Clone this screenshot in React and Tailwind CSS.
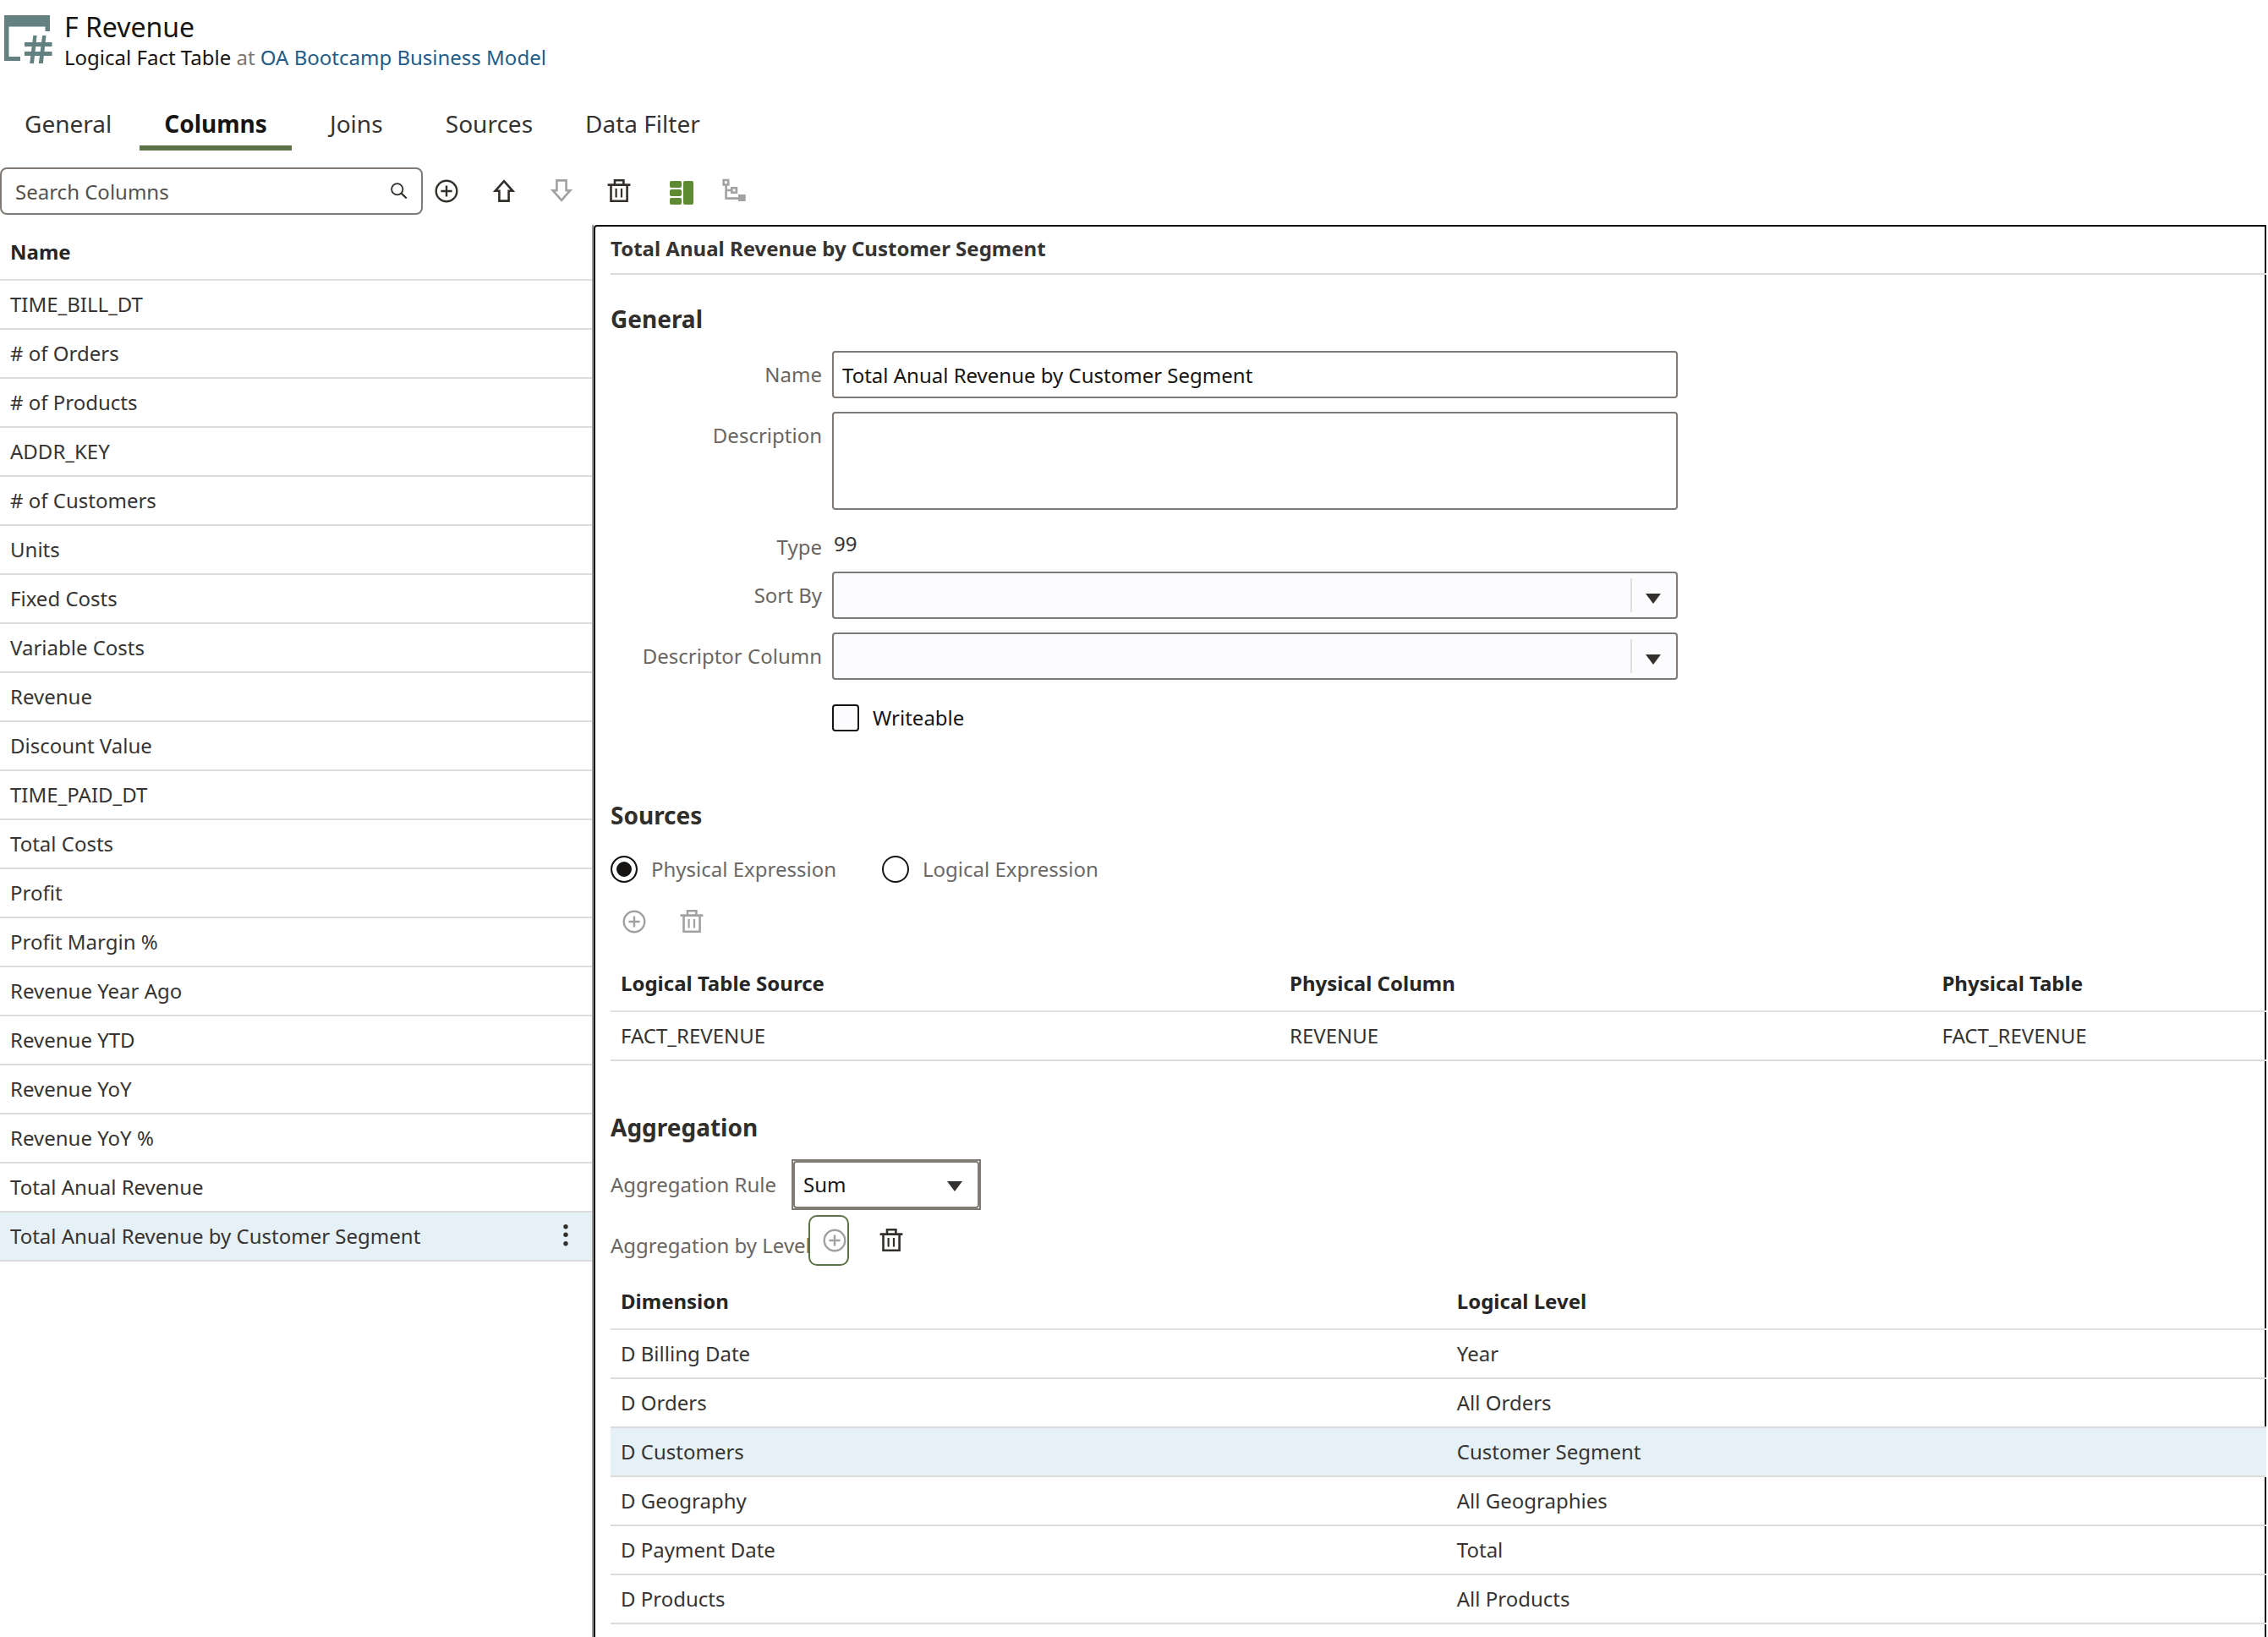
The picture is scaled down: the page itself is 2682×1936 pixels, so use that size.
import React from "react";

const columns = [
  "TIME_BILL_DT",
  "# of Orders",
  "# of Products",
  "ADDR_KEY",
  "# of Customers",
  "Units",
  "Fixed Costs",
  "Variable Costs",
  "Revenue",
  "Discount Value",
  "TIME_PAID_DT",
  "Total Costs",
  "Profit",
  "Profit Margin %",
  "Revenue Year Ago",
  "Revenue YTD",
  "Revenue YoY",
  "Revenue YoY %",
  "Total Anual Revenue",
  "Total Anual Revenue by Customer Segment",
];

const levels = [
  ["D Billing Date", "Year"],
  ["D Orders", "All Orders"],
  ["D Customers", "Customer Segment"],
  ["D Geography", "All Geographies"],
  ["D Payment Date", "Total"],
  ["D Products", "All Products"],
];

const tabs = ["General", "Columns", "Joins", "Sources", "Data Filter"];

function FactTableIcon() {
  return (
    <svg viewBox="0 0 64 80" className="h-20 w-16 shrink-0 fill-[#628180]" aria-hidden="true">
      <path d="M5 18H59V37H53.5V31.5H10.5V67H24V72H5Z" />
      <path d="M29 50H61.5V55H29ZM29 61H61.5V66H29Z" />
      <path d="M39.3 42H43.6L40 75H35.2ZM50.1 42H54.5L50.8 75H45.8Z" />
    </svg>
  );
}

function PlusIcon() {
  return (
    <svg viewBox="0 0 28 28" className="size-7" fill="none" stroke="currentColor" strokeWidth="2.4" aria-hidden="true">
      <circle cx="14" cy="14" r="12.3" />
      <path d="M14 7.4V20.6M7.4 14H20.6" />
    </svg>
  );
}

function UpIcon() {
  return (
    <svg viewBox="0 0 28 28" className="size-7" fill="none" stroke="currentColor" strokeWidth="2.6" aria-hidden="true">
      <path d="M14 2.2L24.3 13.8H19.6V25.6H8.4V13.8H3.7Z" />
    </svg>
  );
}

function DownIcon() {
  return (
    <svg viewBox="0 0 28 28" className="size-7" fill="none" stroke="currentColor" strokeWidth="2.6" aria-hidden="true">
      <path d="M14 24.8L24.3 13.2H19.6V1.4H8.4V13.2H3.7Z" />
    </svg>
  );
}

function TrashIcon() {
  return (
    <svg viewBox="0 0 28 28" className="size-7" fill="none" stroke="currentColor" strokeWidth="2.6" aria-hidden="true">
      <path d="M0.6 6.6H27.4M9 6V1.3H19.4V6M4.5 7V25.7H23.6V7" />
      <path d="M10.6 11V21.4M17 11V21.4" strokeWidth="2.2" />
    </svg>
  );
}

function PanelIcon() {
  return (
    <svg viewBox="0 0 28 32" className="h-8 w-7 fill-[#5f8a34]" aria-hidden="true">
      <rect x="0" y="4" width="14" height="8" rx="2" />
      <rect x="0" y="14" width="14" height="8" rx="2" />
      <rect x="0" y="24" width="14" height="8" rx="2" />
      <rect x="16" y="4" width="12" height="28" rx="2" />
    </svg>
  );
}

function TreeIcon() {
  return (
    <svg viewBox="0 0 28 32" className="h-8 w-7" fill="none" stroke="currentColor" strokeWidth="2.6" aria-hidden="true">
      <rect x="1.6" y="3" width="5.6" height="5.4" />
      <rect x="11.3" y="12.3" width="5.6" height="5.4" />
      <path d="M4.6 9V24.6H20M5 15H11" />
      <rect x="19" y="20" width="8.7" height="8" fill="currentColor" stroke="none" />
    </svg>
  );
}

function Caret() {
  return (
    <svg viewBox="0 0 18 12" className="h-3 w-[18px] fill-[#33302d]" aria-hidden="true">
      <path d="M0 0H18L9 12Z" />
    </svg>
  );
}

function IconButton({ label, muted, children }) {
  return (
    <button type="button" aria-label={label} disabled={muted} className={muted ? "text-[#a3a1a0]" : "text-[#33302c]"}>
      {children}
    </button>
  );
}

const labelText = "w-[250px] shrink-0 text-right leading-14 text-[#6b6661]";
const fieldBox = "w-full max-w-[1000px] rounded-[4px] border-2 border-[#7f7a75]";

function ComboField({ id, label }) {
  return (
    <div className="flex gap-3">
      <label htmlFor={id} className={labelText}>{label}</label>
      <div className="relative w-full max-w-[1000px]">
        <select id={id} className="block h-14 w-full appearance-none rounded-[4px] border-2 border-[#7f7a75] bg-[#fcfcfe] px-3">
          <option></option>
        </select>
        <span className="pointer-events-none absolute inset-y-2 right-5 flex w-9 items-center justify-end border-l-2 border-[#e0dfde] pt-2">
          <Caret />
        </span>
      </div>
    </div>
  );
}

function DataTable({ heads, widths, rows, selected }) {
  return (
    <table className="w-full table-fixed border-collapse text-left">
      <thead>
        <tr className="h-[66px] border-b-2 border-[#e0e0e0] text-[#262626]">
          {heads.map((h, i) => (
            <th key={h} scope="col" className={"px-3 py-0 font-bold " + widths[i]}>{h}</th>
          ))}
        </tr>
      </thead>
      <tbody>
        {rows.map((r, i) => (
          <tr key={r[0]} className={"h-[58px] border-b-2 border-[#dcdcdc] " + (i === selected ? "bg-[#e6f1f7]" : "")}>
            {r.map((c, j) => (
              <td key={j} className="px-3 py-0">{c}</td>
            ))}
          </tr>
        ))}
      </tbody>
    </table>
  );
}

export default function App() {
  return (
    <div className="flex min-h-screen flex-col bg-white font-['Noto_Sans',sans-serif] text-[24px] leading-8 text-[#363432] antialiased">
      <header className="flex h-[84px] gap-3">
        <FactTableIcon />
        <div className="pt-3">
          <h1 className="text-[32px] leading-10 text-[#161513]">F Revenue</h1>
          <p className="text-[#7d7873]">
            <span className="text-[#161513]">Logical Fact Table</span> at{" "}
            <a href="#model" className="text-[#255c86]">OA Bootcamp Business Model</a>
          </p>
        </div>
      </header>

      <nav className="mt-9 flex gap-1 text-[28px]" role="tablist">
        {tabs.map((t) => (
          <button
            key={t}
            type="button"
            role="tab"
            aria-selected={t === "Columns"}
            className={
              "h-[58px] min-w-[145px] border-b-6 px-[29px] " +
              (t === "Columns" ? "border-[#5b7346] font-bold text-[#161513]" : "border-transparent")
            }
          >
            {t}
          </button>
        ))}
      </nav>

      <div className="mt-5 flex items-center">
        <div className="flex h-14 w-[500px] items-center rounded-lg border-2 border-[#7f7a75] px-4">
          <input
            type="text"
            aria-label="Search Columns"
            placeholder="Search Columns"
            className="min-w-0 flex-1 pt-0.5 outline-none placeholder:text-[#55514d]"
          />
          <svg viewBox="0 0 22 22" className="size-5" fill="none" stroke="#33302c" strokeWidth="2" aria-hidden="true">
            <circle cx="8.5" cy="8.5" r="7.3" />
            <path d="M13.6 13.6L20.6 20.4" strokeWidth="2.4" />
          </svg>
        </div>
        <div className="ml-[14px] flex items-center gap-10">
          <IconButton label="Add"><PlusIcon /></IconButton>
          <IconButton label="Move up"><UpIcon /></IconButton>
          <IconButton label="Move down" muted><DownIcon /></IconButton>
          <IconButton label="Delete"><TrashIcon /></IconButton>
        </div>
        <div className="ml-[46px] flex items-center gap-[34px]">
          <IconButton label="Toggle detail view"><PanelIcon /></IconButton>
          <IconButton label="Show hierarchy" muted><TreeIcon /></IconButton>
        </div>
      </div>

      <main className="mt-3 flex flex-1">
        <aside className="w-[26.1%] shrink-0">
          <table className="w-full border-collapse text-left">
            <thead>
              <tr className="h-[65px] border-b-2 border-[#e0e0e0] text-[#262626]">
                <th scope="col" className="px-3 py-0 font-bold">Name</th>
              </tr>
            </thead>
            <tbody>
              {columns.map((c, i) => {
                const active = i === columns.length - 1;
                return (
                  <tr key={c} className={"h-[58px] border-b-2 border-[#dcdcdc] " + (active ? "bg-[#e6f1f7]" : "")}>
                    <td className="px-3 py-0">
                      <div className="flex items-center justify-between">
                        {c}
                        {active && (
                          <button type="button" aria-label="Row actions" className="mr-3">
                            <svg viewBox="0 0 14 28" className="h-7 w-[14px] fill-[#33302c]" aria-hidden="true">
                              <circle cx="7" cy="2.8" r="2.7" />
                              <circle cx="7" cy="12.3" r="2.7" />
                              <circle cx="7" cy="22.8" r="2.7" />
                            </svg>
                          </button>
                        )}
                      </div>
                    </td>
                  </tr>
                );
              })}
            </tbody>
          </table>
        </aside>

        <div className="flex min-w-0 flex-1 border-l-2 border-[#9a9691] pr-0.5">
          <section className="min-w-0 flex-1 rounded-tl-[4px] border-2 border-b-0 border-[#111] pl-[18px]">
            <div className="-mr-0.5">
              <h2 className="flex h-[57px] items-center border-b-2 border-[#dcdcdc] pb-1 font-bold">
                Total Anual Revenue by Customer Segment
              </h2>

              <h3 className="mt-[34px] text-[28px] leading-9 font-bold text-[#312f2b]">General</h3>
              <form className="mt-5 flex flex-col gap-4">
                <div className="flex gap-3">
                  <label htmlFor="name" className={labelText}>Name</label>
                  <input
                    id="name"
                    type="text"
                    defaultValue="Total Anual Revenue by Customer Segment"
                    className={fieldBox + " h-14 px-[10px] text-[#161513]"}
                  />
                </div>
                <div className="flex gap-3">
                  <label htmlFor="description" className={labelText}>Description</label>
                  <textarea id="description" className={fieldBox + " block h-[116px] resize-none px-[10px]"}></textarea>
                </div>
                <div className="flex h-[41px] gap-[14px]">
                  <span className={labelText}>Type</span>
                  <span className="leading-12">99</span>
                </div>
                <ComboField id="sort" label="Sort By" />
                <ComboField id="descriptor" label="Descriptor Column" />
                <label className="mt-[13px] ml-[262px] flex items-center gap-4 self-start text-[#161513]">
                  <input type="checkbox" className="size-8 appearance-none rounded-[4px] border-2 border-[#161513] bg-[#fcfcfe]" />
                  Writeable
                </label>
              </form>

              <h3 className="mt-[81px] text-[28px] leading-9 font-bold text-[#312f2b]">Sources</h3>
              <div className="mt-[30px] flex gap-[54px] text-[#6b6967]">
                <label className="flex items-center gap-4">
                  <input
                    type="radio"
                    name="expression"
                    defaultChecked
                    className="size-8 appearance-none rounded-full border-2 border-[#161513] checked:bg-[#161513] checked:shadow-[inset_0_0_0_5px_white]"
                  />
                  Physical Expression
                </label>
                <label className="flex items-center gap-4">
                  <input
                    type="radio"
                    name="expression"
                    className="size-8 appearance-none rounded-full border-2 border-[#161513] checked:bg-[#161513] checked:shadow-[inset_0_0_0_5px_white]"
                  />
                  Logical Expression
                </label>
              </div>
              <div className="mt-8 flex gap-10 pl-[14px]">
                <IconButton label="Add source" muted><PlusIcon /></IconButton>
                <IconButton label="Delete source" muted><TrashIcon /></IconButton>
              </div>
              <div className="mt-[26px]">
                <DataTable
                  heads={["Logical Table Source", "Physical Column", "Physical Table"]}
                  widths={["w-[40.4%]", "w-[39.4%]", ""]}
                  rows={[["FACT_REVENUE", "REVENUE", "FACT_REVENUE"]]}
                />
              </div>

              <h3 className="mt-[60px] text-[28px] leading-9 font-bold text-[#312f2b]">Aggregation</h3>
              <div className="mt-5 flex items-center">
                <label htmlFor="rule" className="w-[214px] text-[#6b6661]">Aggregation Rule</label>
                <div className="relative border-2 border-[#7f7b74]">
                  <select
                    id="rule"
                    className="block h-14 w-[220px] appearance-none rounded-[4px] border-2 border-[#7f7b74] bg-white px-[10px] text-[#161513]"
                  >
                    <option>Sum</option>
                  </select>
                  <span className="pointer-events-none absolute inset-y-0 right-5 flex items-center pt-1">
                    <Caret />
                  </span>
                </div>
              </div>
              <div className="mt-1.5 flex items-center">
                <span className="w-[234px] pt-3 whitespace-nowrap text-[#6b6661]">Aggregation by Level</span>
                <button
                  type="button"
                  aria-label="Add level"
                  className="relative flex h-[60px] w-12 items-center rounded-[10px] border-2 border-[#5b7346] bg-white pl-[15px] text-[#a3a1a0]"
                >
                  <PlusIcon />
                </button>
                <span className="ml-9 flex">
                  <IconButton label="Delete level"><TrashIcon /></IconButton>
                </span>
              </div>
              <div className="mt-[9px]">
                <DataTable heads={["Dimension", "Logical Level"]} widths={["w-[50.5%]", ""]} rows={levels} selected={2} />
              </div>
            </div>
          </section>
        </div>
      </main>
    </div>
  );
}
